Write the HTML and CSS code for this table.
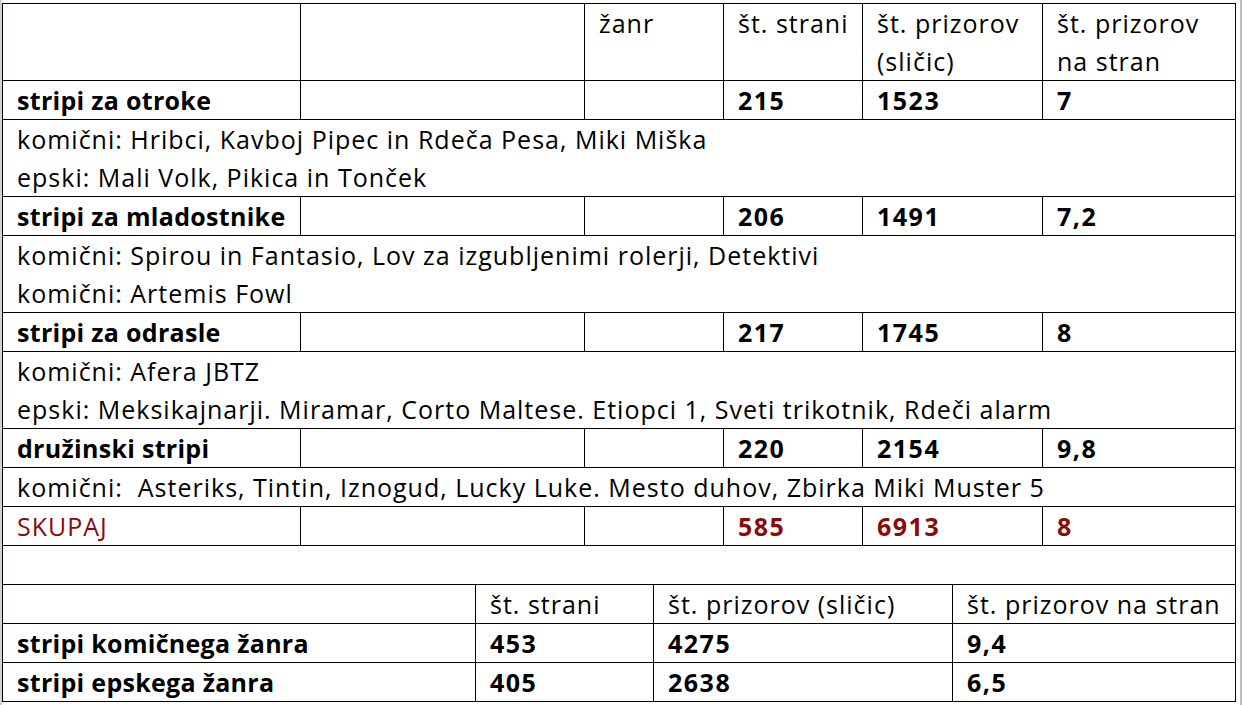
FILE: index.html
```html
<!DOCTYPE html>
<html lang="sl">
<head>
<meta charset="utf-8">
<title>Stripi</title>
<link rel="stylesheet" href="styles.css">
</head>
<body>
<div class="sheet">
  <table class="grid top">
    <colgroup>
      <col class="c1"><col class="c2"><col class="c3"><col class="c4"><col class="c5"><col class="c6">
    </colgroup>
    <tr class="head">
      <td></td><td></td><td>žanr</td><td>št. strani</td><td>št. prizorov (sličic)</td><td>št. prizorov na stran</td>
    </tr>
    <tr class="cat">
      <td>stripi za otroke</td><td></td><td></td><td class="n">215</td><td class="n">1523</td><td class="n">7</td>
    </tr>
    <tr class="desc">
      <td colspan="6">komični: Hribci, Kavboj Pipec in Rdeča Pesa, Miki Miška<br>epski: Mali Volk, Pikica in Tonček</td>
    </tr>
    <tr class="cat">
      <td>stripi za mladostnike</td><td></td><td></td><td class="n">206</td><td class="n">1491</td><td class="n">7,2</td>
    </tr>
    <tr class="desc">
      <td colspan="6">komični: Spirou in Fantasio, Lov za izgubljenimi rolerji, Detektivi<br>komični: Artemis Fowl</td>
    </tr>
    <tr class="cat">
      <td>stripi za odrasle</td><td></td><td></td><td class="n">217</td><td class="n">1745</td><td class="n">8</td>
    </tr>
    <tr class="desc">
      <td colspan="6">komični: Afera JBTZ<br>epski: Meksikajnarji. Miramar, Corto Maltese. Etiopci 1, Sveti trikotnik, Rdeči alarm</td>
    </tr>
    <tr class="cat">
      <td>družinski stripi</td><td></td><td></td><td class="n">220</td><td class="n">2154</td><td class="n">9,8</td>
    </tr>
    <tr class="desc">
      <td colspan="6">komični:&nbsp; Asteriks, Tintin, Iznogud, Lucky Luke. Mesto duhov, Zbirka Miki Muster 5</td>
    </tr>
    <tr class="total">
      <td class="label">SKUPAJ</td><td></td><td></td><td class="n">585</td><td class="n">6913</td><td class="n">8</td>
    </tr>
    <tr class="blank">
      <td colspan="6"></td>
    </tr>
  </table>
  <table class="grid bottom">
    <colgroup>
      <col class="d1"><col class="d2"><col class="d3"><col class="d4">
    </colgroup>
    <tr class="head">
      <td></td><td>št. strani</td><td>št. prizorov (sličic)</td><td>št. prizorov na stran</td>
    </tr>
    <tr class="cat">
      <td>stripi komičnega žanra</td><td class="n">453</td><td class="n">4275</td><td class="n">9,4</td>
    </tr>
    <tr class="cat">
      <td>stripi epskega žanra</td><td class="n">405</td><td class="n">2638</td><td class="n">6,5</td>
    </tr>
  </table>
</div>
</body>
</html>
```

FILE: styles.css
```css
html {
  background: linear-gradient(to right, #cdd1d8 0, #cdd1d8 2px, #ffffff 2px, #ffffff 1240px, #b9bdc4 1240px, #b9bdc4 1242px, #ffffff 1242px);
  min-height: 100%;
}
body {
  margin: 0;
  padding: 3px 0 0 2px;
  font-family: "Open Sans", Lato, sans-serif;
  font-size: 25px;
  color: #000;
}
.sheet {
  width: 1234px;
}
.grid {
  border-collapse: collapse;
  table-layout: fixed;
  width: 1234px;
}
.grid td {
  border: 1px solid #000;
  padding: 0 4px 0 14px;
  line-height: 38px;
  vertical-align: top;
  white-space: nowrap;
  overflow: hidden;
  letter-spacing: 1px;
}
.grid .head td {
  white-space: normal;
}
.c1 { width: 298px; }
.c2 { width: 284px; }
.c3 { width: 139px; }
.c4 { width: 139px; }
.c5 { width: 180px; }
.c6 { width: 193px; }

.d1 { width: 473px; }
.d2 { width: 178px; }
.d3 { width: 299px; }
.d4 { width: 283px; }

.cat td {
  font-weight: 700;
  letter-spacing: 0.3px;
}
.total td {
  font-weight: 700;
  color: #8a0a0a;
}
.total td.label {
  font-weight: 400;
}
.grid td.n {
  letter-spacing: 1.5px;
}
.blank td {
  height: 38px;
}
.bottom tr:first-child td {
  border-top: none;
}
.bottom .head td {
  white-space: nowrap;
}
```
